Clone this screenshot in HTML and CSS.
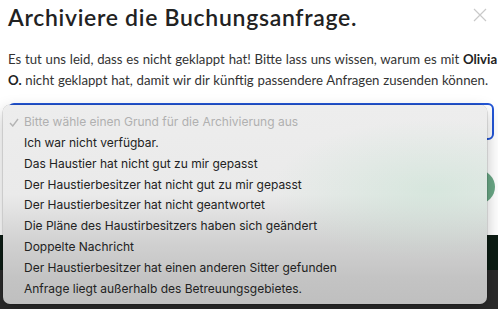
FILE: index.html
```html
<!DOCTYPE html>
<html lang="de">
<head>
    <meta charset="UTF-8">
    <meta name="viewport" content="width=device-width, initial-scale=1.0">
    <title>Buchungsanfrage archivieren</title>
    <link rel="stylesheet" href="styles.css">
</head>
<body>
    <div class="page">
        <div class="modal">
            <div class="modal-head">
                <h1 class="modal-title">Archiviere die Buchungsanfrage.</h1>
                <button class="close-btn" aria-label="Schließen">
                    <svg width="14" height="14" viewBox="0 0 14 14">
                        <path d="M1 1 L13 13 M13 1 L1 13" stroke="#c9c9c9" stroke-width="1.2" fill="none"/>
                    </svg>
                </button>
            </div>

            <p class="intro">
                Es tut uns leid, dass es nicht geklappt hat! Bitte lass uns wissen, warum es mit <b>Olivia O.</b> nicht geklappt hat, damit wir dir künftig passendere Anfragen zusenden können.
            </p>

            <div class="reason-select">Bitte wähle einen Grund für die Archivierung aus</div>

            <div class="actions">
                <button class="archive-btn"></button>
            </div>
        </div>

        <div class="footer-strip"></div>
        <div class="footer"></div>

        <!-- native select popup -->
        <ul class="select-menu">
            <li class="option placeholder">
                <svg class="check" width="10" height="9" viewBox="0 0 10 9">
                    <path d="M1 5 L3.8 8 L9 1" stroke="#b4b4b4" stroke-width="1.4" fill="none"/>
                </svg>
                Bitte wähle einen Grund für die Archivierung aus
            </li>
            <li class="option">Ich war nicht verfügbar.</li>
            <li class="option">Das Haustier hat nicht gut zu mir gepasst</li>
            <li class="option">Der Haustierbesitzer hat nicht gut zu mir gepasst</li>
            <li class="option">Der Haustierbesitzer hat nicht geantwortet</li>
            <li class="option">Die Pläne des Haustirbesitzers haben sich geändert</li>
            <li class="option">Doppelte Nachricht</li>
            <li class="option">Der Haustierbesitzer hat einen anderen Sitter gefunden</li>
            <li class="option">Anfrage liegt außerhalb des Betreuungsgebietes.</li>
        </ul>
    </div>
</body>
</html>
```

FILE: styles.css
```css
* {
    margin: 0;
    padding: 0;
    box-sizing: border-box;
}

body {
    font-family: Lato, 'Noto Sans', sans-serif;
    background: #2b2b2b;
    width: 498px;
    height: 309px;
    overflow: hidden;
}

.page {
    position: relative;
    height: 309px;
    display: flex;
    flex-direction: column;
}

.modal {
    background: white;
    height: 235px;
    padding: 3px 4px 0 8px;
}

.modal-head {
    display: flex;
    justify-content: space-between;
    align-items: flex-start;
}

.modal-title {
    font-size: 23px;
    line-height: 28px;
    font-weight: 600;
    color: #222;
    letter-spacing: 0.7px;
}

.close-btn {
    background: none;
    border: none;
    margin: 5px 7px 0 0;
    width: 14px;
    height: 14px;
    display: flex;
}

.intro {
    margin-top: 18px;
    margin-right: -4px;
    font-size: 13.2px;
    line-height: 21px;
    word-spacing: 0.4px;
    color: #333;
}

.intro b {
    font-weight: 700;
    color: #222;
}

.reason-select {
    margin-top: 12px;
    height: 37px;
    border: 2px solid #2356d6;
    border-radius: 6px;
    font-size: 13px;
    color: #999;
    padding: 9px 12px;
}

.actions {
    display: flex;
    justify-content: flex-end;
    margin-top: 30px;
    margin-right: -1px;
}

.archive-btn {
    width: 110px;
    height: 34px;
    border: none;
    border-radius: 17px;
    background: #6aa886;
}

.footer-strip {
    height: 35px;
    background: #0c1c14;
}

.footer {
    flex: 1;
    background: #2b2b2b;
}

.select-menu {
    position: absolute;
    left: 3px;
    top: 105px;
    width: 484px;
    height: 199px;
    list-style: none;
    padding-top: 7px;
    border-radius: 7px;
    background:
        radial-gradient(ellipse 160px 70px at 430px 85px, rgba(190, 225, 205, 0.45), rgba(190, 225, 205, 0) 100%),
        linear-gradient(to bottom, #ededed 0%, #eaeaea 45%, #d0d0d0 70%, #c3c3c3 88%, #bfbfbf 100%);
    box-shadow: 0 0 0 0.5px rgba(0, 0, 0, 0.18), 0 6px 16px rgba(0, 0, 0, 0.25);
    font-family: Inter, 'Noto Sans', sans-serif;
    font-size: 12px;
    color: #222;
}

.option {
    position: relative;
    height: 20.85px;
    line-height: 20.85px;
    padding-left: 21px;
    white-space: nowrap;
}

.option.placeholder {
    color: #b0b0b0;
}

.check {
    position: absolute;
    left: 6px;
    top: 6px;
}
```
